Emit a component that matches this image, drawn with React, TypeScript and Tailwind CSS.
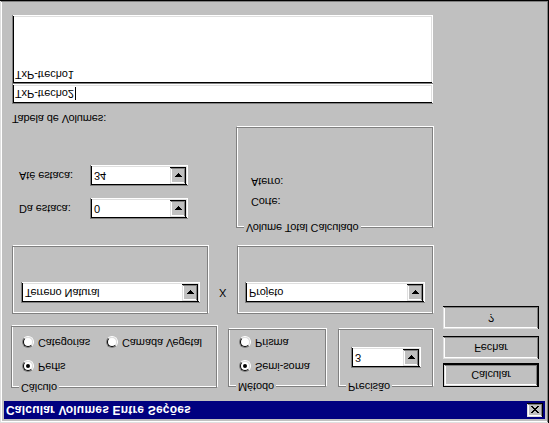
import React from "react";

const raised =
  "shadow-[inset_-1px_-1px_#000,inset_1px_1px_#dfdfdf,inset_-2px_-2px_#808080,inset_2px_2px_#fff]";
const sunken =
  "shadow-[inset_1px_1px_#808080,inset_-1px_-1px_#fff,inset_2px_2px_#000,inset_-2px_-2px_#dfdfdf]";

function Arrow() {
  return (
    <svg width="7" height="4" viewBox="0 0 7 4" shapeRendering="crispEdges">
      <path d="M0 0h7v1H0zM1 1h5v1H1zM2 2h3v1H2zM3 3h1v1H3z" fill="#000" />
    </svg>
  );
}

function Combo({ text, className }: { text: string; className: string }) {
  return (
    <div className={`flex h-[21px] bg-white p-[2px] ${sunken} ${className}`}>
      <div className="flex-1 pl-[2px] leading-[17px] whitespace-nowrap">{text}</div>
      <div className={`w-[16px] h-[17px] bg-[#c0c0c0] flex items-center justify-center ${raised}`}>
        <Arrow />
      </div>
    </div>
  );
}

function Group({
  label,
  className,
  children,
}: {
  label?: string;
  className: string;
  children?: React.ReactNode;
}) {
  return (
    <div
      className={`relative border border-[#808080] shadow-[inset_1px_1px_#fff,1px_1px_#fff] ${className}`}
    >
      {label && (
        <span className="absolute left-[7px] top-[-7px] px-[2px] bg-[#c0c0c0] leading-[13px] whitespace-nowrap">
          {label}
        </span>
      )}
      {children}
    </div>
  );
}

function Radio({ checked }: { checked?: boolean }) {
  return (
    <div className="w-[12px] h-[12px] shrink-0 rounded-full border border-t-[#808080] border-l-[#808080] border-b-white border-r-white">
      <div className="w-full h-full rounded-full border border-t-black border-l-black border-b-[#dfdfdf] border-r-[#dfdfdf] bg-white flex items-center justify-center">
        {checked && <div className="w-[4px] h-[4px] rounded-full bg-black" />}
      </div>
    </div>
  );
}

function RadioItem({ label, checked, className = "" }: { label: string; checked?: boolean; className?: string }) {
  return (
    <div className={`flex items-center gap-[4px] h-[13px] ${className}`}>
      <Radio checked={checked} />
      <span className="leading-[13px] whitespace-nowrap">{label}</span>
    </div>
  );
}

function Button({ label, def }: { label: string; def?: boolean }) {
  if (def) {
    return (
      <div className="w-[96px] h-[24px] border border-black">
        <div className={`w-full h-full flex items-center justify-center bg-[#c0c0c0] ${raised}`}>{label}</div>
      </div>
    );
  }
  return (
    <div className={`w-[96px] h-[23px] flex items-center justify-center bg-[#c0c0c0] ${raised}`}>{label}</div>
  );
}

export default function App() {
  return (
    <div className="w-[549px] h-[423px] overflow-hidden bg-[#c0c0c0]">
      <div
        className={`w-[549px] h-[423px] [transform:scaleY(-1)] bg-[#c0c0c0] p-[4px] text-[11px] tracking-[-0.1px] text-black font-['Liberation_Sans',Arial,sans-serif] shadow-[inset_-1px_-1px_#000,inset_1px_1px_#dfdfdf,inset_-2px_-2px_#808080,inset_2px_2px_#fff] flex flex-col`}
      >
        {/* Title bar */}
        <div className="h-[18px] bg-[#000080] flex items-center pl-[2px] pr-[2px]">
          <span className="flex-1 text-white font-bold text-[12px] tracking-[0.2px] leading-[14px] whitespace-nowrap">
            Calcular Volumes Entre Seções
          </span>
          <div className={`w-[16px] h-[14px] bg-[#c0c0c0] flex items-center justify-center ${raised}`}>
            <svg width="8" height="7" viewBox="0 0 8 7" shapeRendering="crispEdges">
              <path
                d="M0 0h2v1H0zM6 0h2v1H6zM1 1h2v1H1zM5 1h2v1H5zM2 2h4v1H2zM3 3h2v1H3zM2 4h4v1H2zM1 5h2v1H1zM5 5h2v1H5zM0 6h2v1H0zM6 6h2v1H6z"
                fill="#000"
              />
            </svg>
          </div>
        </div>

        {/* Body */}
        <div className="flex pl-[7px] pt-[13px] gap-[10px]">
          {/* Left column */}
          <div className="w-[422px] flex flex-col">
            {/* Row A */}
            <div className="flex">
              <Group label="Cálculo" className="w-[206px] h-[62px] pt-[14px] pl-[10px] flex flex-col gap-[11px]">
                <RadioItem label="Perfis" checked />
                <div className="flex">
                  <RadioItem label="Categorias" className="w-[84px]" />
                  <RadioItem label="Camada Vegetal" />
                </div>
              </Group>
              <Group label="Método" className="ml-[11px] mt-[1px] w-[98px] h-[58px] pt-[13px] pl-[10px] flex flex-col gap-[11px]">
                <RadioItem label="Semi-soma" checked />
                <RadioItem label="Prisma" />
              </Group>
              <Group label="Precisão" className="ml-[12px] mt-[1px] w-[95px] h-[58px]">
                <Combo text="3" className="mt-[18px] ml-[12px] w-[70px]" />
              </Group>
            </div>

            {/* Row B */}
            <div className="flex mt-[12px]">
              <Group className="ml-[1px] w-[196px] h-[68px]">
                <Combo text="Terreno Natural" className="mt-[10px] ml-[8px] w-[179px]" />
              </Group>
              <div className="w-[29px] flex justify-center pt-[15px] leading-[13px]">X</div>
              <Group className="w-[196px] h-[68px]">
                <Combo text="Projeto" className="mt-[10px] ml-[7px] w-[180px]" />
              </Group>
            </div>

            {/* Row C */}
            <div className="flex mt-[18px]">
              <div className="w-[225px] pl-[8px] pt-[9px] flex flex-col gap-[12px]">
                <div className="flex items-center">
                  <span className="w-[71px] leading-[13px]">Da estaca:</span>
                  <Combo text="0" className="w-[98px]" />
                </div>
                <div className="flex items-center">
                  <span className="w-[71px] leading-[13px]">Até estaca:</span>
                  <Combo text="34" className="w-[98px]" />
                </div>
              </div>
              <Group label="Volume Total Calculado" className="w-[197px] h-[101px] pl-[14px] pt-[19px] flex flex-col gap-[7px]">
                <span className="leading-[13px]">Corte:</span>
                <span className="leading-[13px]">Aterro:</span>
              </Group>
            </div>

            {/* Tabela */}
            <div className="mt-[2px] ml-[1px] leading-[13px]">Tabela de Volumes:</div>
            <div className={`mt-[8px] ml-[1px] w-[421px] h-[20px] bg-white p-[2px] pl-[3px] flex items-center ${sunken}`}>
              <span className="leading-[13px]">TxP-trecho2</span>
              <span className="w-[1px] h-[13px] bg-black ml-[1px]" />
            </div>
            <div className={`ml-[1px] w-[421px] h-[69px] bg-white p-[2px] pl-[3px] ${sunken}`}>
              <div className="leading-[13px] pt-[1px]">TxP-trecho1</div>
            </div>
          </div>

          {/* Right column buttons */}
          <div className="flex flex-col pt-[1px]">
            <Button label="Calcular" def />
            <div className="mt-[4px]">
              <Button label="Fechar" />
            </div>
            <div className="mt-[7px]">
              <Button label="?" />
            </div>
          </div>
        </div>
      </div>
    </div>
  );
}
